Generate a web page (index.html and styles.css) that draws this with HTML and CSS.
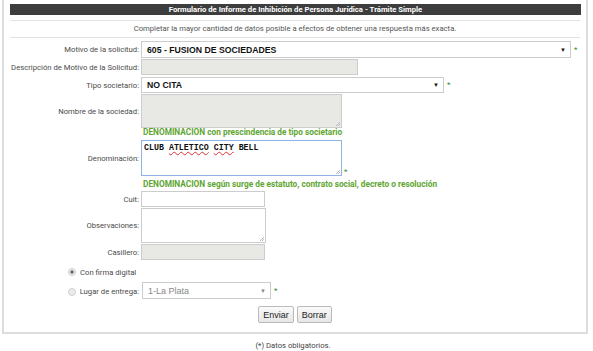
FILE: index.html
```html
<!DOCTYPE html>
<html lang="es">
<head>
    <meta charset="UTF-8">
    <meta name="viewport" content="width=device-width, initial-scale=1.0">
    <title>Formulario de Informe de Inhibición</title>
    <link rel="stylesheet" href="styles.css">
</head>
<body>
    <div class="box">
        <div class="titlebar">Formulario de Informe de Inhibición de Persona Jurídica - Trámite Simple</div>
        <p class="intro">Completar la mayor cantidad de datos posible a efectos de obtener una respuesta más exacta.</p>

        <form class="form">
            <div class="row">
                <label>Motivo de la solicitud:</label>
                <div class="field">
                    <div class="select sel-motivo"><span>605 - FUSION DE SOCIEDADES</span><span class="arrow">▼</span></div>
                    <span class="req">*</span>
                </div>
            </div>

            <div class="row gap-1">
                <label>Descripción de Motivo de la Solicitud:</label>
                <div class="field"><input type="text" class="inp inp-desc" disabled></div>
            </div>

            <div class="row gap-2">
                <label>Tipo societario:</label>
                <div class="field">
                    <div class="select sel-tipo"><span>NO CITA</span><span class="arrow">▼</span></div>
                    <span class="req">*</span>
                </div>
            </div>

            <div class="row gap-1">
                <label>Nombre de la sociedad:</label>
                <div class="field"><textarea class="area area-nombre" disabled></textarea></div>
            </div>

            <p class="hint">DENOMINACION con prescindencia de tipo societario</p>

            <div class="row gap-3">
                <label>Denominación:</label>
                <div class="field field-bottom">
                    <div class="area area-denom"><span>CLUB</span> <span class="bad">ATLETICO</span> <span class="bad">CITY</span> <span>BELL</span></div>
                    <span class="req">*</span>
                </div>
            </div>

            <p class="hint hint-2">DENOMINACION según surge de estatuto, contrato social, decreto o resolución</p>

            <div class="row gap-2">
                <label>Cuit:</label>
                <div class="field"><input type="text" class="inp inp-short"></div>
            </div>

            <div class="row gap-1">
                <label>Observaciones:</label>
                <div class="field"><textarea class="area area-obs"></textarea></div>
            </div>

            <div class="row gap-1">
                <label>Casillero:</label>
                <div class="field"><input type="text" class="inp inp-short" disabled></div>
            </div>

            <div class="radio-line">
                <span class="radio checked"></span>
                <span>Con firma digital</span>
            </div>

            <div class="row gap-4">
                <label class="radio-label"><span class="radio"></span>Lugar de entrega:</label>
                <div class="field">
                    <div class="select sel-lugar"><span>1-La Plata</span><span class="arrow light">▼</span></div>
                    <span class="req">*</span>
                </div>
            </div>

            <div class="buttons">
                <button type="submit">Enviar</button>
                <button type="reset">Borrar</button>
            </div>
        </form>
    </div>

    <p class="note">(*) Datos obligatorios.</p>
</body>
</html>
```

FILE: styles.css
```css
body {
    margin: 0;
    font-family: Roboto, "Liberation Sans", sans-serif;
    font-size: 7.7px;
    color: #4a4a4a;
    background-color: white;
}
.box {
    margin-left: 2px;
    width: 570px;
    padding: 4px 6px 9px 6px;
    border: 2px solid #ddd;
    border-top: none;
}
.titlebar {
    height: 11px;
    line-height: 11px;
    background-color: #3d3d3d;
    color: white;
    font-weight: bold;
    font-size: 7.7px;
    text-align: center;
    margin-right: -1px;
}
.intro {
    margin: 5px 0 0 0;
    border-top: 1px solid #e2e2e2;
    border-bottom: 1px solid #e2e2e2;
    line-height: 16px;
    text-align: center;
    color: #555;
}
.form {
    padding-top: 3px;
}
.row {
    display: grid;
    grid-template-columns: 129px 1fr;
    column-gap: 2px;
    align-items: center;
}
.gap-1 { margin-top: 1px; }
.gap-2 { margin-top: 2px; }
.gap-3 { margin-top: 3px; }
.gap-4 { margin-top: 4px; }
label {
    text-align: right;
    white-space: nowrap;
}
.field {
    display: flex;
    align-items: center;
}
.field-bottom {
    align-items: flex-end;
}
.req {
    color: #2f8a2f;
    font-size: 8px;
    margin-left: 3px;
    line-height: 8px;
}
.field-bottom .req {
    margin-left: 2px;
}
.select {
    box-sizing: border-box;
    display: flex;
    justify-content: space-between;
    align-items: center;
    border: 1px solid #ccc;
    background-color: white;
    padding: 0 4px 0 5px;
    font-family: "Liberation Sans", Arial, sans-serif;
    font-weight: bold;
    font-size: 8.7px;
    color: #111;
}
.arrow {
    font-size: 6px;
    color: #111;
}
.arrow.light {
    color: #888;
}
.sel-motivo {
    width: 430px;
    height: 17px;
}
.sel-tipo {
    width: 303px;
    height: 16px;
}
.sel-lugar {
    width: 129px;
    height: 17px;
    font-weight: normal;
    font-size: 9px;
    color: #888;
    margin-left: 1px;
}
.inp {
    box-sizing: border-box;
    height: 16px;
    margin: 0;
    border: 1px solid #ccc;
    background-color: white;
}
.inp:disabled {
    background-color: #e8e8e4;
}
.inp-desc {
    width: 217px;
}
.inp-short {
    width: 124px;
}
/* textareas: grip drawn in the bottom-right corner */
.area {
    box-sizing: border-box;
    margin: 0;
    border: 1px solid #ccc;
    background-color: white;
    background-image: linear-gradient(135deg, transparent 52%, #b8b8b8 52%, #b8b8b8 62%, transparent 62%, transparent 76%, #b8b8b8 76%, #b8b8b8 86%, transparent 86%);
    background-repeat: no-repeat;
    background-size: 5px 5px;
    background-position: right 1px bottom 1px;
    resize: none;
    overflow: hidden;
    display: block;
}
.area:disabled {
    background-color: #e8e8e4;
}
.area-nombre {
    width: 201px;
    height: 34px;
}
.area-denom {
    width: 201px;
    height: 36px;
    border-color: #8fb3e6;
    padding: 2px 2px;
    font-family: "Liberation Mono", monospace;
    font-weight: bold;
    font-size: 8.3px;
    color: #111;
}
.bad {
    text-decoration: underline wavy #e03030;
    text-decoration-thickness: 1px;
}
.area-obs {
    width: 125px;
    height: 35px;
}
.hint {
    margin: 0;
    padding-left: 133px;
    line-height: 9px;
    font-size: 8.3px;
    color: #5ea532;
    font-weight: bold;
}
.hint-2 {
    margin-top: 3px;
    line-height: 10px;
}
.radio-line {
    display: flex;
    align-items: center;
    margin-top: 6px;
    height: 12px;
    padding-left: 58px;
}
.radio {
    display: inline-block;
    box-sizing: border-box;
    width: 8px;
    height: 8px;
    border-radius: 50%;
    border: 1px solid #d0d0d0;
    background-color: #ececec;
    margin-right: 4px;
    vertical-align: middle;
}
.radio.checked {
    background: radial-gradient(circle, #666 0, #666 1.3px, #ececec 2px);
}
.radio-label {
    display: flex;
    align-items: center;
    justify-content: flex-end;
    padding-top: 2px;
}
.buttons {
    margin-top: 7px;
    display: flex;
    justify-content: center;
    gap: 3px;
}
button {
    height: 17px;
    padding: 0 4px;
    border: 1px solid #bbb;
    border-radius: 2px;
    background: linear-gradient(#fafafa, #e6e6e6);
    font-family: "Liberation Sans", Arial, sans-serif;
    font-size: 9px;
    color: #222;
}
.note {
    margin: 6px 0 0 0;
    width: 586px;
    text-align: center;
    line-height: 12px;
    color: #444;
}
```
